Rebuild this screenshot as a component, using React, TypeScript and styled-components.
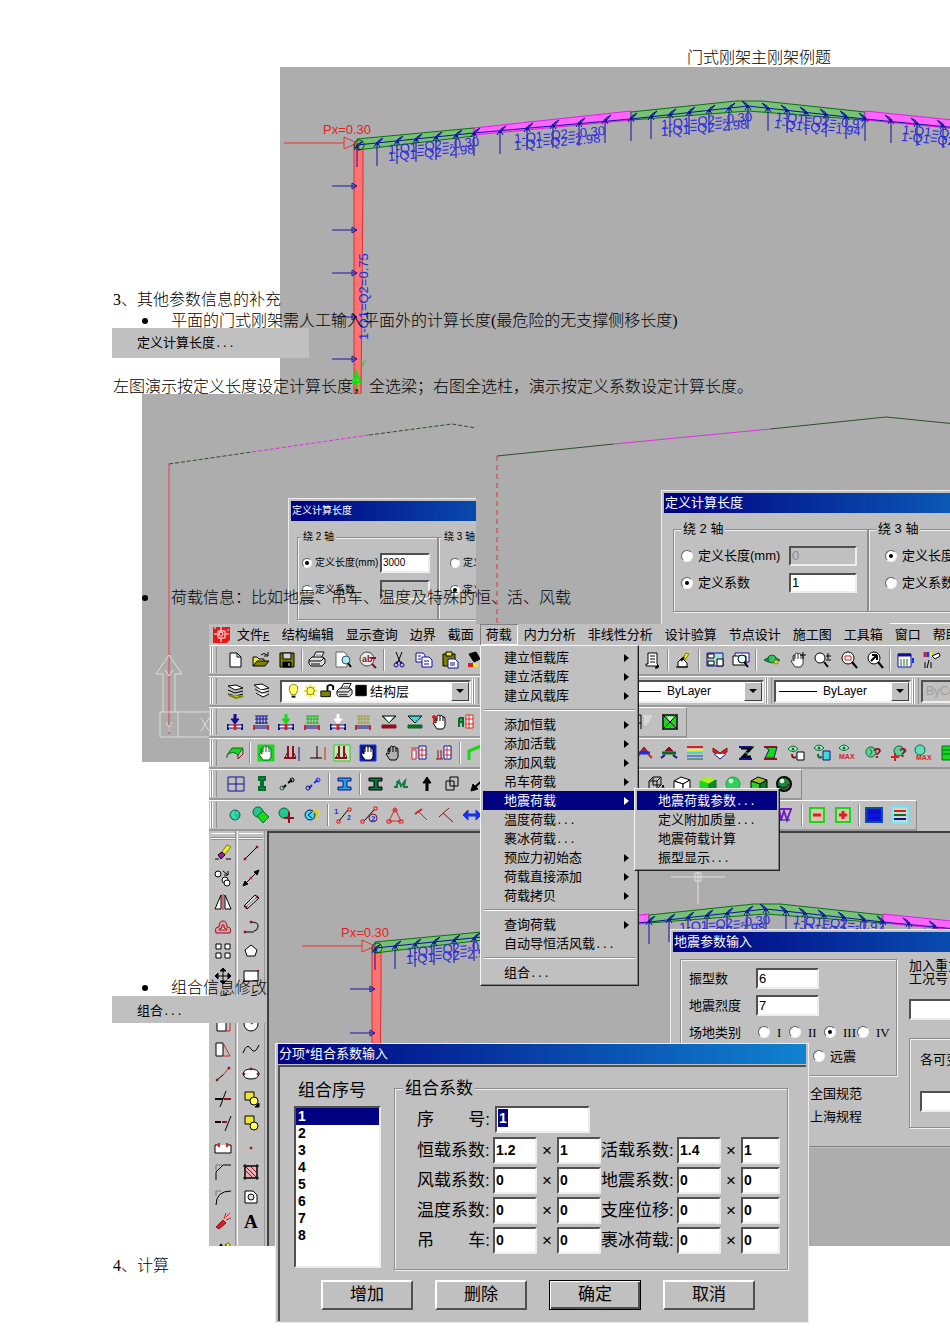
import React from 'react';
import styled, { createGlobalStyle, css } from 'styled-components';

const GlobalStyle = createGlobalStyle`
  *, *::before, *::after { box-sizing: border-box; }
  body { margin: 0; background: #fff; }
  button, input, select { font: inherit; color: inherit; border-radius: 0; margin: 0; }
`;

const UI = `"Liberation Sans", "Noto Sans CJK SC", sans-serif`;
const FACE = '#c0c0c0';
const CANVAS = '#adadad';

/* ---------- document ---------- */

const Page = styled.main`
  position: relative;
  overflow: hidden;
  padding: 47px 0 68px 113px;
  font: 300 16px/21px "Liberation Serif", "Noto Sans CJK SC", serif;
  color: #000;
`;

const Header = styled.header`
  position: relative;
  z-index: 2;
  padding-right: 119px;
  text-align: right;
`;

const Line = styled.p<{ $gap: number }>`
  position: relative;
  z-index: 2;
  margin: ${(p) => p.$gap}px 0 0;
  white-space: nowrap;
`;

const Bullets = styled.ul<{ $gap: number }>`
  position: relative;
  z-index: 2;
  margin: ${(p) => p.$gap}px 0 0;
  padding: 0;
  list-style: none;
  white-space: nowrap;
`;

const Bullet = styled.li`
  display: flex;
  align-items: center;
  gap: 23px;
  padding-left: 29px;
  &::before {
    content: '';
    width: 6px;
    height: 6px;
    border-radius: 50%;
    background: #000;
  }
`;

/* ---------- pasted pictures and windows ---------- */

interface Place { $x: number; $y: number; $w?: number; $h?: number }

const Placed = styled.div<Place>`
  position: absolute;
  left: ${(p) => p.$x}px;
  top: ${(p) => p.$y}px;
  ${(p) => (p.$w ? css`width: ${p.$w}px;` : css`right: 0;`)}
  ${(p) => p.$h && css`height: ${p.$h}px;`}
  overflow: hidden;
  font: 400 13px/19px ${UI};
`;

const Picture = styled(Placed)`
  background: ${CANVAS};
`;

const Drawing = styled.svg`
  display: block;
  width: 100%;
  height: 100%;
`;

const Strip = styled(Placed)`
  padding: 5px 0 6px 25px;
  background: ${FACE};
`;

const DotRun = styled.span`
  font: 11px/13px "Liberation Mono", monospace;
`;

function Label({ text }: { text: string }) {
  const dots = text.endsWith('...');
  return <>{dots ? text.slice(0, -3) : text}{dots && <DotRun>...</DotRun>}</>;
}

/* ---------- frame drawing ---------- */

const STEMS: [number, number, number][] = [
  [357, 145, 167], [377, 142, 166], [397, 140, 164], [416, 138, 162], [436, 136, 160], [456, 134, 158],
  [474, 132, 156], [500, 130, 154], [527, 127, 150], [553, 124, 148], [579, 122, 146], [605, 119, 143],
  [631, 117, 141], [651, 115, 139], [670, 113, 137], [689, 111, 135], [709, 109, 133], [729, 107, 131],
  [748, 105, 129], [768, 107, 131], [787, 109, 133], [806, 111, 135], [826, 113, 137], [846, 115, 139],
  [865, 117, 141], [891, 119, 143], [917, 122, 146], [943, 124, 148], [969, 127, 151], [995, 130, 154],
];

const BEAM_LABELS: [number, number, number, string, string][] = [
  [388, 158, -5, '1-Q1=Q2=-0.30', '1-Q1=Q2=2.98'],
  [514, 147, -5, '1-Q1=Q2=-0.30', '1-Q1=Q2=2.98'],
  [661, 133, -5, '1-Q1=Q2=-0.30', '1-Q1=Q2=2.98'],
  [774, 125, 5, '1-Q1=Q2=-0.97', '1-Q1=Q2=1.94'],
  [901, 138, 5, '1-Q1=Q2=-0.97', '1-Q1=Q2=1.94'],
];

const CadText = styled.text`
  font: 13px "Liberation Sans", sans-serif;
`;

function PortalFrame() {
  return (
    <g fill="none">
      <path d="M354 145H363V185L361 394H354Z" fill="#ff7373" stroke="#d83030" />
      <path d="M357 139L474 128V136L357 150Z" fill="#79c079" stroke="#0c700c" />
      <path d="M474 128L631 111V120L474 135Z" fill="#ff66ff" stroke="#e020e0" />
      <path d="M631 112L736 101H762L865 112V120L748 111L631 120Z" fill="#79c079" stroke="#0c700c" />
      <path d="M865 111L1021 127V135L865 120Z" fill="#ff66ff" stroke="#e020e0" />
      <path d="M357 145L474 133L631 119L748 106L865 119L1021 134" stroke="#1010a0" />
      {STEMS.map(([x, top, bottom]) => (
        <g key={x} stroke="#1010a0">
          <path d={`M${x} ${top}V${bottom}M${x - 3} ${top + 5}L${x} ${top}L${x + 3} ${top + 5}`} />
          <path d={x < 748 ? `M${x} ${top + 3}L${x + 6} ${top - 4}L${x + 1} ${top - 1}Z` : `M${x} ${top + 3}L${x - 6} ${top - 4}L${x - 1} ${top - 1}Z`} fill="#107080" />
        </g>
      ))}
      {BEAM_LABELS.map(([x, y, angle, upper, lower]) => (
        <g key={x} transform={`translate(${x} ${y}) rotate(${angle})`} fill="#2828e0">
          <CadText x={1} y={-4}>{upper}</CadText>
          <CadText x={0} y={3}>{lower}</CadText>
        </g>
      ))}
      {[186, 230, 273, 317, 359].map((y) => (
        <path key={y} d={`M332 ${y}H357M352 ${y - 3}L357 ${y}L352 ${y + 3}Z`} stroke="#1818a0" />
      ))}
      <CadText transform="translate(368 340) rotate(-90)" fill="#2828e0">1-Q1=Q2=0.75</CadText>
      <path d="M284 143H344M344 137L357 143L344 149Z" stroke="#e83030" />
      <circle cx="359" cy="145" r="5" stroke="#0c500c" />
      <CadText x={323} y={134} fill="#e82020">Px=0.30</CadText>
      <path d="M356 394V370M353 382L356 372L360 382Z" stroke="#10e010" fill="#60ff60" strokeWidth="2" />
      <path d="M361 361L363 364L366 360M363 364V367" stroke="#40c020" />
    </g>
  );
}

/* ---------- icons ---------- */

type Stroke = [d: string, stroke: string, fill?: string, width?: number];
interface Glyph { t: string; x: number; y: number; c: string; s: number }

const K = '#000';
const N = '#101090';
const R = '#d82020';
const M = '#8c1020';
const G = '#18d818';
const D = '#0a6a2a';
const Y = '#f0e828';
const W = '#fff';
const C = '#40d8d8';
const O = '#808000';
const BL = '#1430f0';

const ring = (x: number, y: number, r: number) => `M${x - r} ${y}a${r} ${r} 0 1 0 ${2 * r} 0a${r} ${r} 0 1 0 ${-2 * r} 0`;
const support = (c: string): Stroke[] => [
  ['M2 11V17M16 11V17', N, undefined, 2], ['M2 12H16V15H2Z', N, W], ['M9 11V17', R, undefined, 3], ['M9 1V9', c, undefined, 3], ['M5 6H13L9 11Z', c, c],
];
const spread = (c: string): Stroke[] => [
  ['M3 3H16M5 3V11M8 3V11M11 3V11M14 3V11M3 6H16M3 10H16', c], ['M2 12V17M16 12V17', R, undefined, 2], ['M3 13H15M3 15H15', N],
];
const section = (c: string, f: string): Stroke[] => [
  ['M3 3H16V6H12V12H16V15H3V12H8V6H3Z', c, f],
];
const hand = (f: string, c = K): Stroke[] => [
  ['M4 8V5Q5 3 6 5V3Q8 1 9 3Q11 1 12 4Q14 3 14 6V13L12 16H6L2 10Q3 8 5 10V5M9 3V8M12 4V8M6 5V8', c, f],
];
const hammer: Stroke[] = [
  ['M2 14H14', M, undefined, 2], ['M6 2V13M11 2V13', M, undefined, 2], ['M5 9L3 14M12 9L14 14', M],
];
const bolted: Stroke[] = [
  ['M9 2H16V15H9Z', N, W], ['M10 6H16M10 11H16M12 3V14', R],
];
const globe: Stroke[] = [[ring(9, 9, 5), D, '#20c890'], ['M8 5L6 9L10 13M10 6L12 8', C, undefined, 2]];
const eye = (y: number): Stroke[] => [[`M1 ${y}Q6 ${y - 6} 11 ${y}Q6 ${y + 5} 1 ${y}Z`, D, '#a0f0c0'], [ring(6, y, 1), D, D]];
const lens = (f: string): Stroke[] => [[ring(8, 7, 6), K, f], ['M12 11L17 17', K, undefined, 2]];
const cube = (a: string, b: string, c: string): Stroke[] => [
  ['M1 6L8 2L17 5L10 9Z', K, a], ['M1 6L10 9V17L1 14Z', K, b], ['M10 9L17 5V13L10 17Z', K, c],
];

const ICONS: Record<string, (Stroke | Glyph)[]> = {
  new: [['M3 2H10L14 6V16H3Z', K, W], ['M10 2V6H14', K]],
  open: [['M1 15V6H5L7 8H12V10', K, Y], ['M1 15L5 10H17L13 15Z', K, O], ['M9 4Q12 1 15 4M16 1V5H12', K]],
  save: [['M2 2H16V16H2Z', K, O], ['M5 2H13V8H5Z', K, '#d0d0d0'], ['M5 11H13V16H5Z', K, K], ['M11 12V15', W]],
  print: [['M5 7L8 1H16L13 7', K, W], ['M1 9L4 6H15L17 8V12L14 15H3L1 13Z', K, '#ddd'], ['M1 10H13L16 7M3 13H12', K], ['M8 4H13', '#666']],
  preview: [['M2 1H10L13 4V16H2Z', '#666', W], [ring(12, 9, 4), '#356', '#b0e8f0'], ['M14 12L17 16', K, undefined, 2]],
  find: [[ring(8, 8, 7), '#444', '#e8e8e8'], { t: 'ab', x: 3, y: 11, c: M, s: 9 }, ['M13 13L17 17M12 7H17', M, undefined, 2]],
  cut: [['M6 1L10 11M12 1L8 11', K], [ring(6, 14, 2), N], [ring(12, 14, 2), N], ['M8 11L6 12M10 11L12 12', N, undefined, 2]],
  copy: [['M1 2H8L10 4V11H1Z', N, W], ['M7 6H14L17 9V16H7Z', N, W], ['M3 5H6M3 8H6M9 10H14M9 13H14', N]],
  paste: [['M2 3H14V15H2Z', K, O], ['M5 1H11V5H5Z', K, Y], ['M7 8H14L17 11V17H7Z', N, W], ['M9 12H14M9 14H14', N]],
  match: [['M3 3L10 1L14 8L8 11Z', K, K], ['M2 14H7', R, undefined, 4], ['M7 14H12', Y, undefined, 4]],
  script: [['M5 2H14V13L16 15H3V13H5Z', K, W], ['M7 5H12M7 8H12M7 11H12', K], ['M15 14V17H12Z', K, K]],
  pencil: [['M4 11L8 7L13 12V16H4Z', K, W], ['M2 16H14', K], ['M9 7L12 2L15 3L11 9Z', O, Y], ['M7 10L10 6', K, undefined, 2]],
  panes: [['M1 2H17V15H1Z', N, '#a8e0e0'], ['M2 3H8V7H2ZM2 10H8V14H2ZM11 8H17V15H11Z', K, W]],
  windows: [['M3 2H17V11H3Z', N, W], ['M1 5H14V14H1Z', K, W], [ring(10, 8, 4), K, '#dff'], ['M12 11L16 16', K, undefined, 2]],
  orbit: [['M1 9Q9 3 17 9Q9 14 1 9Z', D, '#109040'], [ring(9, 8, 4), D, '#30c060'], [ring(13, 11, 2), O, Y]],
  pan: [...hand(W, '#333'), ['M14 1V8M11 4H17', K]],
  zoomrt: [[ring(6, 7, 5), K, W], ['M10 11L14 16', K, undefined, 2], ['M12 5H17M14 2V8M12 9H17', K]],
  zoomwin: [...lens(W), ['M5 5H11V9H5Z', R]],
  zoomprev: [...lens(W), ['M5 10L11 4M11 4V9M6 4L11 4', K, undefined, 2]],
  props: [['M1 3H14V16H1Z', N, W], ['M1 4H14', N, undefined, 3], ['M4 8V15M7 8V15M10 8V15', D, undefined, 1], ['M16 7V12', BL, undefined, 2]],
  palette: [['M2 1V6', R, undefined, 3], ['M5 1V6', BL, undefined, 3], ['M8 1V6', Y, undefined, 3], ['M9 5L16 2L17 5L12 8Z', K, W], ['M2 11V17M6 9L4 17M8 11V17', K]],
  layers: [['M1 4L9 3L16 6L8 8Z', K, W], ['M1 8L8 11L16 9M1 12L9 14L16 12', K], ['M2 13L9 16L16 14', O, Y, 2]],
  layers2: [['M1 3L9 2L16 6L8 8Z', K, W], ['M2 7L9 11L16 9M3 11L10 15L16 12', K, W]],
  bulb: [['M7 13Q3 8 5 4Q9 0 13 4Q15 8 11 13Z', O, '#ffff70'], ['M7 15H11', K, undefined, 2]],
  sun: [['M4 4L14 14M14 4L4 14M9 2V16M2 9H16', Y, undefined, 2], [ring(9, 9, 4), O, '#ffff70']],
  lock: [['M2 9H12V15H2Z', K, O], ['M9 9V4Q12 1 15 4V8', K, undefined, 2]],
  swatch: [['M3 3H14V14H3Z', K, K]],
  load1: support(N), load2: spread(N), load3: support(G), load4: spread('#20b020'), load5: support(W), load6: spread('#a0a040'),
  wedge1: [['M2 3H16L9 10Z', K, W], ['M3 3L9 10L15 3', D], ['M2 12H16V15H2Z', M, M]],
  wedge2: [['M2 3H16L9 10Z', K, C], ['M2 12H16V15H2Z', D, D]],
  handload: [...hand(W), ['M1 4H6M3 2V10', R, undefined, 2]],
  plate: [['M2 5V14M2 5H6V9H2M6 9V14', D, '#60a060', 2], ['M9 2H16V15H9Z', R, W], ['M9 6H16M9 11H16M12 2V15', R]],
  hatch: [['M1 2H6V16M1 10H6', K], ['M8 3H17M9 5H16M9 7H15M9 9H14M9 11H12', '#eee']],
  solid: [['M2 2H16V16H2Z', '#333', G, 2], ['M2 2L16 16M16 2L2 16', K], ['M6 4H12L9 8Z', '#ddd', '#ddd']],
  roof: [['M1 11L6 4H17L12 11Q7 6 1 11Z', D, G], ['M1 11V14M12 10V15L17 10V5', M]],
  hand1: [['M1 1H17V17H1Z', G, G], ...hand(W, D)],
  ham1: [...hammer, ['M17 3V17', N]],
  cross1: [['M9 2V14M2 14H14', K], ['M9 9V13M17 3V16', R]],
  ham2: [['M1 1H17V17H1Z', G, '#c8e8c0'], ...hammer],
  hand2: [['M1 1H17V17H1Z', BL, '#0818a0'], ...hand(W, K)],
  hand3: hand('#b0b0b0'),
  frame1: [['M2 6H6V15H2ZM1 4H8', R, W], ...bolted],
  frame2: [['M3 6V15M6 6V15M1 15H8', M], ...bolted],
  portal: [['M3 16V7L15 2', G, undefined, 3]],
  truss1: [['M5 8L9 3L13 8Z', M, '#a02050'], ['M3 9H15', BL, undefined, 3], ['M1 14L5 10M13 10L17 14', R, undefined, 2]],
  truss2: [['M5 7L9 3L13 7Z', M, M], ['M2 9H16', D, G, 3], ['M1 14L5 11M13 11L17 14', N, undefined, 2]],
  stripes: [['M1 3H17', R, undefined, 2], ['M1 6H17', Y, undefined, 2], ['M1 9H17', C, undefined, 2], ['M1 12H17', BL, undefined, 1], ['M1 15H17', D, undefined, 1]],
  vee: [['M2 4L9 9L16 4V8L9 12L2 8Z', M, R], ['M3 10L9 15L15 10', N, W]],
  zed1: [['M4 4H14L6 13H14', K, undefined, 3], ['M2 3H15M2 15H15', N, undefined, 2], ['M8 9H12', C]],
  zed2: [['M3 3H15L12 14H3L7 6Z', N, G], ['M2 3H15M2 15H15', M, undefined, 2]],
  view1: [...eye(5), ['M10 8H17V16H10Z', K, W], ['M5 10Q5 15 9 13', M, undefined, 2]],
  view2: [...eye(4), ['M10 7H17V16H10Z', N, C], ['M5 10Q5 15 9 13', D, undefined, 2]],
  max1: [...eye(4), { t: 'MAX', x: 1, y: 15, c: R, s: 7 }],
  query1: [[ring(7, 8, 5), D, '#60d0a0'], ['M6 5L8 8L6 11', D], { t: '?', x: 9, y: 14, c: M, s: 14 }],
  query2: [[ring(10, 7, 5), D, '#60d0a0'], ['M2 13H10M6 9V17', R, undefined, 2], { t: '?', x: 10, y: 13, c: M, s: 13 }],
  max2: [[ring(6, 6, 5), D, '#60e0c0'], { t: 'MAX', x: 2, y: 16, c: R, s: 7 }],
  sheet: [['M2 2H12V16H2Z', D, G], ['M2 6H12M2 10H12', D]],
  grid: [['M1 2H17V16H1ZM9 2V16M1 9H17', N]],
  column: [['M6 2H12V5H10V12H12V15H6V12H8V5H6Z', D, '#109050', 2]],
  link: [['M5 13L8 10M10 8L14 5', K, undefined, 2], [ring(4, 13, 2), D], [ring(14, 5, 2), K]],
  link2: [['M5 13L8 10M10 8L14 5', BL, undefined, 2], [ring(4, 13, 2), N], [ring(14, 5, 2), BL]],
  beam1: section(N, '#20a0e0'), beam2: section(K, '#107040'),
  haunch: [['M2 12H6M4 12L7 6L9 11L13 6L12 12H16M4 7H7', '#108040', undefined, 2]],
  up: [['M9 16V7', K, undefined, 3], ['M5 8L9 2L13 8Z', K, K]],
  group: [['M3 6H11V15H3ZM7 2H15V11H7Z', K, 'none']],
  arrowdl: [['M16 3L6 12', K, undefined, 2], ['M2 16L4 9L9 14Z', K, K]],
  wire: [['M1 6H9V14H1ZM5 2H13V10H5ZM1 6L5 2M9 6L13 2M9 14L13 10', K], ['M13 16L15 10L17 16Z', K]],
  box1: cube(W, W, W), box2: [['M1 6L8 2L17 5L10 9Z', '#a0f010', '#b0f020'], ['M1 6L10 9V17L1 14Z', G, G], ['M10 9L17 5V13L10 17Z', D, '#0a8a2a']],
  ball: [[ring(9, 9, 7), '#18a040', '#30d060'], [ring(7, 6, 2), '#b0ffc0', '#d0ffd8']],
  box3: cube('#a0c020', '#30d020', '#0a7a2a'),
  ball2: [[ring(9, 9, 7), K, '#208040', 2], [ring(7, 6, 2), '#d0ffd0', W], ['M4 11Q9 16 14 9', K]],
  globe,
  globe2: [[ring(6, 6, 5), D, '#20c890'], ['M5 10L11 5L17 11L11 17Z', D, G]],
  globe3: [[ring(7, 7, 5), D, '#20c890'], ['M12 6V17M7 12H17', M, undefined, 2]],
  globe4: [[ring(7, 9, 5), N, C], ['M9 6L5 9L9 12', N], { t: '?', x: 9, y: 14, c: '#e0d000', s: 14 }],
  line1: [['M5 15L14 4', K], ['M3 14H6V17H3ZM14 2H17V5H14Z', R], { t: '1', x: 0, y: 8, c: BL, s: 8 }, { t: '2', x: 13, y: 14, c: BL, s: 7 }],
  line2: [['M4 15L14 4', K], ['M1 14H4V17H1ZM14 1H17V4H14Z', R], [ring(13, 12, 4), M], { t: '2', x: 11, y: 15, c: BL, s: 8 }],
  angle1: [['M9 3L3 15H15Z', R, 'none'], [ring(9, 4, 2), R], ['M1 14H5V17H1ZM13 14H17V17H13Z', R]],
  angle2: [['M7 6L15 14', R], ['M3 8L10 3', R, undefined, 2]],
  angle3: [['M2 11L12 2M6 7L16 16', M]],
  both: [['M4 9H14', BL, undefined, 3], ['M0 9L5 4V14ZM18 9L13 4V14Z', BL, BL]],
  springs: [['M1 3H15M2 3L4 14L7 5L10 14L14 3', '#7020c0', undefined, 2], ['M3 14H13', N]],
  minus: [['M2 2H16V16H2Z', G, '#d8c8b0', 2], ['M5 9H13', R, undefined, 3]],
  plus: [['M2 2H16V16H2Z', G, '#d8c8b0', 2], ['M5 9H13M9 5V13', R, undefined, 3]],
  block: [['M1 2H17V16H1Z', '#0a50a0', '#1010e0', 2], ['M4 6H15M4 12H15', N]],
  bars: [['M1 1H17V17H1Z', '#70e8f0', '#d0d8d0', 2], ['M3 5H15', R, undefined, 2], ['M3 9H15', D, undefined, 2], ['M3 13H15', N, undefined, 2]],
  erase: [['M1 15H5M12 15H17', K], ['M7 9L13 1L17 3L11 10Z', O, Y], ['M4 11L8 8L11 11L7 15Z', K, '#a020a0']],
  copyobj: [[ring(4, 5, 3), K, W], [ring(11, 11, 3), K, W], [ring(13, 14, 3), K, W], ['M9 2L14 6M14 2V6H10', K]],
  mirror: [['M7 2V16H1Z', K, W], ['M11 2V16H17Z', K, W], ['M9 1V17', R]],
  offset: [['M2 15H16Q18 9 13 9Q13 3 9 3Q5 3 5 9Q0 9 2 15Z', M, '#e8a0a0'], ['M5 12H13Q13 10 10 10V7H8V10Q5 10 5 12Z', M, '#ddd']],
  array: [['M2 2H7V7H2ZM11 2H16V7H11ZM2 11H7V16H2ZM11 11H16V16H11Z', K, W]],
  move: [['M9 2V16M2 9H16', K], ['M6 4L9 1L12 4ZM6 14L9 17L12 14ZM4 6L1 9L4 12ZM14 6L17 9L14 12Z', K, K]],
  rotate: [['M4 13Q2 3 12 4M12 1V7', K]],
  scale: [['M3 6H12V15H3Z', K, W], ['M3 2H16V15H12', R, 'none']],
  stretch: [['M2 3H9V16H2Z', K, W], ['M9 3L16 16H9', R, 'none']],
  lengthen: [['M3 15L9 10', K], ['M9 10L15 3', R], [ring(3, 15, 1), M, M], [ring(15, 3, 1), M, M]],
  trim: [['M12 1L6 17', K], ['M1 9H9', K, undefined, 2], ['M10 9H17', M, undefined, 2]],
  extend: [['M17 2L11 17', K], ['M1 8H7', K, undefined, 2], ['M8 8H13', M, undefined, 2]],
  break: [['M1 6H5M13 6H17V14H1V6', K, W], ['M5 4V8M13 4V8', R, undefined, 2]],
  chamfer: [['M2 17V9L9 2H17', K], ['M2 8V2H8', '#777']],
  fillet: [['M2 17Q2 3 17 3', K], ['M2 8V3H7', '#777']],
  explode: [['M2 15L9 8L12 11L5 17Z', M, R], ['M10 7L12 1M12 8L17 6M12 5L16 1', R]],
  text3: [['M1 17L7 9L10 14L13 8', K, undefined, 3], [ring(14, 8, 2), O, Y]],
  line: [['M3 15L15 3', K], [ring(3, 15, 1), M, M], [ring(15, 3, 1), M, M]],
  xline: [['M2 16L16 2', K], ['M1 17L3 12L6 15ZM17 1L12 3L15 6Z', K, K], [ring(9, 9, 1), R, R]],
  mline: [['M2 13L13 2L17 5L5 16Z', K, '#ddd'], ['M5 13L14 5', '#777'], [ring(4, 14, 1), M, M], [ring(15, 4, 1), M, M]],
  pline: [['M2 14H12M9 4Q17 4 16 9Q15 13 12 13', K], [ring(3, 14, 1), M, M], [ring(9, 4, 1), M, M]],
  polygon: [['M9 3L15 8L13 14H5L3 8Z', K, W]],
  rect: [['M2 4H16V14H2Z', K, W], ['M15 4H17M1 14H3', M, undefined, 2]],
  arc: [['M3 15Q3 4 15 4', K]],
  circle: [[ring(9, 8, 7), K, W], ['M9 8L12 5', R, undefined, 2]],
  spline: [['M1 13Q5 2 9 9Q13 15 17 5', K]],
  ellipse: [['M1 9Q2 4 9 4Q16 4 17 9Q16 14 9 14Q2 14 1 9Z', K, W], [ring(2, 9, 1), M, M], [ring(9, 4, 1), M, M], [ring(16, 9, 1), M, M]],
  insert: [['M3 2H12V10H3Z', K, Y], [ring(12, 11, 4), K, '#ffff60'], ['M13 17H17V13Z', K, K]],
  blockdef: [['M3 2H12V10H3Z', K, Y], [ring(12, 12, 4), K, '#ffff60']],
  point: [[ring(9, 9, 1), M, R]],
  hatchobj: [['M3 3H15V15H3ZM1 3H17M3 1V17M15 1V17M1 15H17', K, '#e8b0b0'], ['M4 8L10 14M4 4L14 14M9 4L14 9', M]],
  region: [['M3 3H11L15 7V15H3Z', K, W], [ring(9, 9, 3), K, '#ddd']],
  mtext: [{ t: 'A', x: 2, y: 16, c: K, s: 19 }],
};

function Icon({ name }: { name: string }) {
  return (
    <svg width="18" height="18" viewBox="0 0 18 18" aria-hidden="true">
      {ICONS[name].map((part, i) =>
        Array.isArray(part) ? (
          <path key={i} d={part[0]} stroke={part[1]} fill={part[2] ?? 'none'} strokeWidth={part[3] ?? 1} />
        ) : (
          <text key={i} x={part.x} y={part.y} fill={part.c} fontSize={part.s} fontWeight="700" fontFamily={name === 'mtext' ? 'Liberation Serif' : 'Liberation Sans'}>{part.t}</text>
        ),
      )}
    </svg>
  );
}

/* ---------- CAD window ---------- */

const MenuBar = styled.nav`
  display: flex;
  align-items: center;
  height: 21px;
  padding-left: 4px;
  white-space: nowrap;
`;

const MenuTitle = styled.button<{ $open?: boolean }>`
  flex: none;
  height: 21px;
  padding: 0 6px;
  border: 0;
  background: none;
  ${(p) => p.$open && css`box-shadow: inset 1px 1px #808080, inset -1px -1px #fff;`}
`;

const Logo = styled.svg`
  flex: none;
  width: 18px;
  height: 18px;
`;

const Bar = styled.div<{ $w?: number }>`
  display: flex;
  align-items: center;
  height: 31px;
  ${(p) => p.$w && css`width: ${p.$w}px;`}
  border-top: 1px solid #fff;
  border-bottom: 2px solid #989898;
  ${(p) => p.$w && css`border-right: 1px solid #8c8c8c;`}
`;

const Grip = styled.span`
  flex: none;
  width: 6px;
  height: 26px;
  margin: 0 2px;
  border: solid #909090;
  border-width: 0 1px;
  box-shadow: inset 1px 0 #fff, -1px 0 #fff;
`;

const Group = styled.div<{ $w: number; $ml: number }>`
  flex: none;
  display: flex;
  align-items: center;
  justify-content: space-between;
  width: ${(p) => p.$w}px;
  margin-left: ${(p) => p.$ml}px;
`;

const ToolButton = styled.button`
  flex: none;
  display: block;
  width: 18px;
  height: 18px;
  padding: 0;
  border: 0;
  background: none;
  svg { display: block; }
`;

const Divider = styled.span`
  width: 2px;
  height: 22px;
  margin: 0 -2px;
  background: linear-gradient(90deg, #8c8c8c 50%, #fff 50%);
`;

const inset = css`
  border: 2px solid;
  border-color: #505050 #eee #eee #505050;
`;

const Combo = styled.div<{ $w: number; $ml?: number; $off?: boolean }>`
  flex: none;
  display: flex;
  align-items: center;
  gap: 4px;
  width: ${(p) => p.$w}px;
  height: 23px;
  margin-left: ${(p) => p.$ml ?? 0}px;
  padding-left: 3px;
  background: ${(p) => (p.$off ? FACE : '#fff')};
  color: ${(p) => (p.$off ? '#909090' : '#000')};
  font-size: 12px;
  ${inset}
`;

const ComboSelect = styled.select<{ $size?: number }>`
  flex: 1;
  min-width: 0;
  height: 19px;
  padding: 0;
  border: 0;
  appearance: none;
  background: none;
  font-size: ${(p) => p.$size ?? 12}px;
`;

const ComboArrow = styled.span`
  flex: none;
  display: grid;
  place-items: center;
  width: 18px;
  height: 19px;
  background: ${FACE};
  border: 1px solid;
  border-color: #fff #404040 #404040 #fff;
  &::after {
    content: '';
    border: 4px solid transparent;
    border-top-color: #000;
    border-bottom: 0;
  }
`;

const LineSample = styled.span<{ $w: number }>`
  flex: none;
  width: ${(p) => p.$w}px;
  height: 1px;
  margin-right: 2px;
  background: #000;
`;

const LayerIcons = styled.span`
  display: flex;
  margin-right: -4px;
  svg { width: 17px; }
`;

function Tools({ w, ml, names }: { w: number; ml: number; names: string }) {
  return (
    <Group $w={w} $ml={ml}>
      {names.split(' ').map((n, i) => (n === '|' ? <Divider key={i} /> : <ToolButton key={i} aria-label={n}><Icon name={n} /></ToolButton>))}
    </Group>
  );
}

const CadWindow = styled(Placed)`
  background: ${FACE};
`;

const Work = styled.div`
  display: flex;
  height: 415px;
`;

const Palette = styled.div`
  flex: none;
  display: grid;
  grid-template-columns: 28px 28px;
  grid-template-rows: 10px;
  grid-auto-rows: minmax(24px, 1fr);
  justify-items: center;
  align-items: center;
  width: 58px;
  height: 427px;
  background: linear-gradient(90deg, transparent 26px, #989898 26px 27px, transparent 27px 28px, #fff 28px 29px, transparent 29px 55px, #989898 55px 56px, transparent 56px);
`;

const PaletteGrip = styled.span`
  width: 24px;
  height: 6px;
  border: solid #fff;
  border-width: 1px 0;
  box-shadow: 0 1px #909090, inset 0 -1px #909090;
`;

const Viewport = styled.div`
  flex: 1;
  min-width: 0;
  background: ${CANVAS};
  border: solid #404040;
  border-width: 2px 0 0 2px;
`;

const TITLES = ['结构编辑', '显示查询', '边界', '截面', '荷载', '内力分析', '非线性分析', '设计验算', '节点设计', '施工图', '工具箱', '窗口', '帮助'];

const PALETTE = ['erase', 'line', 'copyobj', 'xline', 'mirror', 'mline', 'offset', 'pline', 'array', 'polygon', 'move', 'rect', 'rotate', 'arc',
  'scale', 'circle', 'stretch', 'spline', 'lengthen', 'ellipse', 'trim', 'insert', 'extend', 'blockdef', 'break', 'point', 'chamfer', 'hatchobj',
  'fillet', 'region', 'explode', 'mtext', 'text3'];

function Cad() {
  return (
    <CadWindow $x={209} $y={624}>
      <MenuBar>
        <Logo viewBox="0 0 18 18">
          <path d="M0 1H17V14L14 17H0Z" fill="#e81818" />
          <path d="M5 5H12V12H5ZM8 1V5M8 12V16M1 8H5M12 8H16M2 3V1M15 5V3" fill="none" stroke="#fff" strokeWidth="1" />
          <circle cx="8" cy="8" r="2" fill="none" stroke="#fff" />
        </Logo>
        <MenuTitle>文件<u><DotRun>F</DotRun></u></MenuTitle>
        {TITLES.map((t) => <MenuTitle key={t} $open={t === '荷载'}>{t}</MenuTitle>)}
      </MenuBar>
      <Bar>
        <Grip />
        <Tools w={257} ml={8} names="new open save | print preview find | cut copy paste match" />
        <Tools w={298} ml={159} names="script | pencil | panes windows | orbit pan zoomrt zoomwin zoomprev | props palette" />
      </Bar>
      <Bar>
        <Grip />
        <Tools w={44} ml={8} names="layers layers2" />
        <Combo $w={191} $ml={9}>
          <LayerIcons>{['bulb', 'sun', 'lock', 'print', 'swatch'].map((n) => <Icon key={n} name={n} />)}</LayerIcons>
          <ComboSelect $size={13} aria-label="图层"><option>结构层</option></ComboSelect>
          <ComboArrow />
        </Combo>
        <Grip />
        <Combo $w={150} $ml={133}>
          <LineSample $w={42} />
          <ComboSelect aria-label="颜色"><option>ByLayer</option></ComboSelect>
          <ComboArrow />
        </Combo>
        <Grip />
        <Combo $w={137}>
          <LineSample $w={38} />
          <ComboSelect aria-label="线型"><option>ByLayer</option></ComboSelect>
          <ComboArrow />
        </Combo>
        <Grip />
        <Combo $w={120} $off>
          <ComboSelect aria-label="打印样式" disabled><option>ByColor</option></ComboSelect>
          <ComboArrow />
        </Combo>
      </Bar>
      <Bar $w={478}>
        <Grip />
        <Tools w={249} ml={7} names="load1 load2 load3 load4 load5 load6 wedge1 wedge2 handload plate" />
        <Tools w={44} ml={160} names="hatch solid" />
      </Bar>
      <Bar>
        <Grip />
        <Tools w={258} ml={7} names="roof | hand1 ham1 cross1 ham2 hand2 hand3 frame1 frame2 | portal" />
        <Tools w={323} ml={151} names="truss1 truss2 stripes vee zed1 zed2 view1 view2 max1 query1 query2 max2 sheet" />
      </Bar>
      <Bar $w={593}>
        <Grip />
        <Tools w={260} ml={8} names="grid column link link2 | beam1 | beam2 haunch up group arrowdl" />
        <Tools w={145} ml={161} names="wire box1 box2 ball box3 ball2" />
      </Bar>
      <Bar $w={708}>
        <Grip />
        <Tools w={255} ml={7} names="globe globe2 globe3 globe4 | line1 line2 angle1 angle2 angle3 both" />
        <Tools w={132} ml={296} names="springs | minus plus | block bars" />
      </Bar>
      <Work>
        <Palette>
          <PaletteGrip /><PaletteGrip />
          {PALETTE.map((n) => <ToolButton key={n} aria-label={n}><Icon name={n} /></ToolButton>)}
        </Palette>
        <Viewport>
          <Drawing>
            <g transform="translate(-251 -30)"><PortalFrame /></g>
            <path d="M402 44H456M429 39V71M426 40H432V48H426Z" stroke="#e0e0e0" fill="none" />
          </Drawing>
        </Viewport>
      </Work>
    </CadWindow>
  );
}

/* ---------- menus ---------- */

const MenuBox = styled(Placed)`
  padding: 2px 2px 3px;
  background: ${FACE};
  border: 1px solid;
  border-color: #f4f4f4 #202020 #202020 #f4f4f4;
  box-shadow: inset -1px -1px #808080;
`;

const MenuItem = styled.button<{ $hot?: boolean }>`
  display: flex;
  align-items: center;
  justify-content: space-between;
  width: 100%;
  height: 19px;
  padding: 0 7px 0 21px;
  border: 0;
  white-space: nowrap;
  background: ${(p) => (p.$hot ? '#000080' : 'none')};
  color: ${(p) => (p.$hot ? '#fff' : '#000')};
`;

const MenuArrow = styled.span`
  border: 4px solid transparent;
  border-left: 5px solid currentColor;
  border-right: 0;
`;

const MenuRule = styled.hr`
  height: 2px;
  margin: 4px 1px;
  border: 0;
  background: linear-gradient(#8c8c8c 50%, #fff 50%);
`;

const LOAD_MENU = ['建立恒载库>', '建立活载库>', '建立风载库>', '-', '添加恒载>', '添加活载>', '添加风载>', '吊车荷载>', '地震荷载>', '温度荷载...', '裹冰荷载...',
  '预应力初始态>', '荷载直接添加>', '荷载拷贝>', '-', '查询荷载>', '自动导恒活风载...', '-', '组合...'];
const QUAKE_MENU = ['地震荷载参数...', '定义附加质量...', '地震荷载计算', '振型显示...'];

function Menu({ items, hot, ...place }: { items: string[]; hot: string } & Place) {
  return (
    <MenuBox {...place} role="menu">
      {items.map((item, i) => {
        const text = item.replace('>', '');
        return item === '-' ? <MenuRule key={i} /> : (
          <MenuItem key={i} role="menuitem" $hot={text === hot}>
            <span><Label text={text} /></span>{item.endsWith('>') && <MenuArrow />}
          </MenuItem>
        );
      })}
    </MenuBox>
  );
}

/* ---------- dialogs ---------- */

const DialogBox = styled(Placed)`
  padding: 2px 0 0 2px;
  background: ${FACE};
  border: solid #ececec;
  border-width: 1px 0 0 1px;
`;

const TitleBar = styled.h2<{ $size?: number; $span: number }>`
  height: 20px;
  margin: 0;
  padding-left: 1px;
  font: 400 ${(p) => p.$size ?? 13}px/19px ${UI};
  color: #fff;
  white-space: nowrap;
  background: linear-gradient(90deg, #000080, #1084d0 ${(p) => p.$span}px);
`;

const Fieldset = styled.fieldset`
  min-width: 0;
  margin: 0;
  padding: 0;
  border: 1px solid #8c8c8c;
  box-shadow: inset 1px 1px #f0f0f0, 1px 1px #f0f0f0;
`;

const Legend = styled.legend`
  margin-left: 7px;
  padding: 0 2px;
  white-space: pre;
  background: ${FACE};
`;

const TextBox = styled.input<{ $w?: number; $h: number }>`
  ${(p) => (p.$w ? css`width: ${p.$w}px;` : css`width: 100%; min-width: 0;`)}
  height: ${(p) => p.$h}px;
  padding: 0 1px;
  background: #fff;
  ${inset}
  &:disabled { background: ${FACE}; color: #888; }
`;

const Radio = styled.input.attrs({ type: 'radio' })<{ $s?: number }>`
  appearance: none;
  flex: none;
  display: grid;
  place-items: center;
  width: ${(p) => p.$s ?? 12}px;
  height: ${(p) => p.$s ?? 12}px;
  border: 1px solid;
  border-color: #606060 #f4f4f4 #f4f4f4 #606060;
  border-radius: 50%;
  background: #fff;
  &:checked::after {
    content: '';
    width: 4px;
    height: 4px;
    border-radius: 50%;
    background: #000;
  }
`;

const Choice = styled.label<{ $gap?: number }>`
  display: flex;
  align-items: center;
  gap: ${(p) => p.$gap ?? 5}px;
  white-space: nowrap;
`;

const LengthBody = styled.div<{ $small?: boolean }>`
  display: grid;
  grid-template-columns: ${(p) => (p.$small ? '141px 180px' : '195px 230px')};
  margin: ${(p) => (p.$small ? '8px 0 0 6px' : '8px 0 0 9px')};
  font-size: ${(p) => (p.$small ? 10 : 13)}px;
`;

const AxisGroup = styled(Fieldset)<{ $small?: boolean }>`
  height: 91px;
  legend {
    margin-left: ${(p) => (p.$small ? 3 : 7)}px;
    line-height: 16px;
  }
  & + & > div { padding-left: ${(p) => (p.$small ? 11 : 16)}px; }
`;

const AxisRows = styled.div<{ $small?: boolean }>`
  display: grid;
  grid-template-columns: ${(p) => (p.$small ? '78px 50px' : '108px 68px')};
  grid-auto-rows: 27px;
  align-items: center;
  padding: ${(p) => (p.$small ? '4px 0 0 4px' : '5px 0 0 7px')};
`;

const OkEdge = styled.div`
  height: 4px;
  margin: 11px 0 0 226px;
  border-top: 2px solid #fff;
`;

function AxisFields({ id, legend, small, byLength, length, factor }: { id: string; legend: string; small?: boolean; byLength: boolean; length: string; factor: string }) {
  return (
    <AxisGroup $small={small}>
      <Legend>{legend}</Legend>
      <AxisRows $small={small}>
        <Choice $gap={small ? 3 : 5}><Radio name={id} defaultChecked={byLength} $s={small ? 10 : 12} />定义长度(mm)</Choice>
        <TextBox aria-label="定义长度" $h={20} disabled={!byLength} defaultValue={length} />
        <Choice $gap={small ? 3 : 5}><Radio name={id} defaultChecked={!byLength} $s={small ? 10 : 12} />定义系数</Choice>
        <TextBox aria-label="定义系数" $h={20} disabled={byLength} defaultValue={factor} />
      </AxisRows>
    </AxisGroup>
  );
}

const SeismicBody = styled.div`
  display: grid;
  grid-template-columns: 217px 1fr;
  column-gap: 12px;
  padding: 7px 0 0 7px;
  height: 195px;
  border-bottom: 1px solid #808080;
`;

const SeismicGroup = styled(Fieldset)`
  display: grid;
  grid-template-columns: 67px 1fr;
  grid-template-rows: 27px 27px 26px 22px;
  align-items: center;
  height: 117px;
  padding: 5px 0 0 8px;
`;

const SiteClasses = styled.div`
  display: grid;
  grid-template-columns: 31px 35px 33px 33px;
  padding-left: 2px;
  font-family: "Liberation Serif", serif;
`;

const Far = styled(Choice)`
  grid-column: 2;
  padding-left: 57px;
`;

const Codes = styled.div`
  padding: 6px 0 0 130px;
  line-height: 23px;
`;

const SideNote = styled.p`
  margin: 0 0 14px;
  line-height: 13px;
`;

const SideGroup = styled(Fieldset)`
  height: 90px;
  margin-top: 18px;
  padding: 11px 0 0 10px;
`;

const SideLabel = styled.label`
  display: grid;
  gap: 22px;
  white-space: nowrap;
`;

const FactorDialog = styled(DialogBox)`
  padding: 0 2px 1px 2px;
  border-width: 1px;
`;

const FactorBody = styled.div`
  margin-top: 1px;
  padding: 12px 18px 11px 14px;
  border: solid #505050;
  border-width: 2px 0 0 2px;
  font-size: 17px;
`;

const FactorColumns = styled.div`
  display: grid;
  grid-template-columns: 87px 1fr;
  column-gap: 13px;
`;

const ListLabel = styled.label`
  display: block;
  height: 27px;
  padding-left: 4px;
  line-height: 24px;
`;

const ListBox = styled.select`
  display: block;
  width: 87px;
  height: 162px;
  padding: 0;
  overflow: hidden;
  background: #fff;
  color: #000;
  outline: none;
  ${inset}
  option {
    min-height: 17px;
    padding: 0 2px;
    font: 700 14px/17px ${UI};
  }
  option:checked {
    background: #000080 linear-gradient(#000080, #000080);
    color: #fff;
    -webkit-text-fill-color: #fff;
  }
`;

const FactorGroup = styled(Fieldset)`
  height: 191px;
  padding: 6px 0 0 22px;
  legend { margin-left: -14px; }
`;

const FactorGrid = styled.div`
  display: grid;
  grid-template-columns: 76px 44px 20px 44px 76px 44px 20px 39px;
  grid-template-rows: 31px;
  grid-auto-rows: 30px;
  align-items: center;
  input { font: 700 14px/20px ${UI}; }
`;

const FieldName = styled.label`
  display: flex;
  justify-content: space-between;
  width: 73px;
  white-space: nowrap;
`;

const Serial = styled.span`
  grid-column: 2 / span 7;
  display: flex;
  align-items: center;
  padding-left: 2px;
`;

const SerialBox = styled.span`
  display: flex;
  width: 95px;
  height: 27px;
  padding: 1px;
  background: #fff;
  ${inset}
  input {
    width: 10px;
    height: 18px;
    padding: 0 1px;
    border: 0;
    background: #000080;
    color: #fff;
  }
`;

const Times = styled.span`
  text-align: center;
`;

const Actions = styled.div`
  display: flex;
  gap: 22px;
  padding: 10px 0 0 27px;
`;

const PushButton = styled.button<{ $main?: boolean }>`
  width: 92px;
  height: 30px;
  padding: 0;
  background: ${FACE};
  font-size: 17px;
  line-height: 24px;
  border: 2px solid;
  border-color: #fff #505050 #505050 #fff;
  ${(p) => p.$main && css`border: 1px solid #000; box-shadow: inset 1px 1px #fff, inset -2px -2px #505050;`}
`;

const FACTORS: [string, string, string, string, string, string][] = [
  ['恒载系数:', '1.2', '1', '活载系数:', '1.4', '1'],
  ['风载系数:', '0', '0', '地震系数:', '0', '0'],
  ['温度系数:', '0', '0', '支座位移:', '0', '0'],
  ['吊|车:', '0', '0', '裹冰荷载:', '0', '0'],
];

function Factor({ id, name, a, b }: { id: string; name: string; a: string; b: string }) {
  return (
    <>
      <FieldName htmlFor={id}>{name.split('|').map((s) => <span key={s}>{s}</span>)}</FieldName>
      <TextBox id={id} $h={27} defaultValue={a} />
      <Times>×</Times>
      <TextBox aria-label={name} $h={27} defaultValue={b} />
    </>
  );
}

export default function App() {
  return (
    <Page>
      <GlobalStyle />
      <Header>门式刚架主刚架例题</Header>
      <Line $gap={221}>3、其他参数信息的补充</Line>
      <Bullets $gap={0}><Bullet>平面的门式刚架需人工输入平面外的计算长度(最危险的无支撑侧移长度)</Bullet></Bullets>
      <Line $gap={45}>左图演示按定义长度设定计算长度，全选梁；右图全选柱，演示按定义系数设定计算长度。</Line>
      <Bullets $gap={190}><Bullet>荷载信息：比如地震、吊车、温度及特殊的恒、活、风载</Bullet></Bullets>
      <Bullets $gap={369}><Bullet>组合信息修改</Bullet></Bullets>
      <Line $gap={257}>4、计算</Line>

      <Picture $x={280} $y={67} $h={327}>
        <Drawing><g transform="translate(-280 -67)"><PortalFrame /></g></Drawing>
      </Picture>
      <Strip $x={112} $y={328} $w={197}><Label text="定义计算长度..." /></Strip>

      <Picture $x={476} $y={394} $h={231}>
        <Drawing fill="none">
          <path d="M21 62L138 50M294 35L410 23L640 46" stroke="#285028" />
          <path d="M138 50L294 35" stroke="#e030e0" />
          <path d="M21 62V231" stroke="#e03030" strokeDasharray="5 4" />
        </Drawing>
      </Picture>
      <Picture $x={142} $y={394} $w={334} $h={368}>
        <Drawing fill="none">
          <path d="M27 70L110 58M227 41L310 30L334 34" stroke="#285028" strokeDasharray="4 2" />
          <path d="M110 58L227 41" stroke="#e030e0" strokeDasharray="4 2" />
          <path d="M27 70V340" stroke="#e84040" />
          <path d="M27 261L40 280H33V318M27 261L14 280H21V318M18 318H36V343H18ZM36 318H68M36 343H68M24 328L27 333L30 328M27 333V338M59 324L67 337M67 324L59 337M23 276L27 282L31 276" stroke="#dcdcdc" />
        </Drawing>
      </Picture>
      <DialogBox $x={288} $y={498} $w={188} $h={127}>
        <TitleBar $size={10} $span={330}>定义计算长度</TitleBar>
        <LengthBody $small>
          <AxisFields id="l2" legend="绕 2 轴" small byLength length="3000" factor="" />
          <AxisFields id="l3" legend="绕 3 轴" small byLength={false} length="" factor="1" />
        </LengthBody>
      </DialogBox>
      <DialogBox $x={661} $y={490} $h={135}>
        <TitleBar $span={430}>定义计算长度</TitleBar>
        <LengthBody>
          <AxisFields id="r2" legend="绕 2 轴" byLength={false} length="0" factor="1" />
          <AxisFields id="r3" legend="绕 3 轴" byLength length="" factor="" />
        </LengthBody>
        <OkEdge />
      </DialogBox>

      <Cad />

      <DialogBox $x={670} $y={929} $h={219}>
        <TitleBar $span={480}>地震参数输入</TitleBar>
        <SeismicBody>
          <div>
            <SeismicGroup>
              <label htmlFor="modes">振型数</label>
              <TextBox id="modes" $w={63} $h={21} defaultValue="6" />
              <label htmlFor="intensity">地震烈度</label>
              <TextBox id="intensity" $w={63} $h={21} defaultValue="7" />
              <span>场地类别</span>
              <SiteClasses>
                {['I', 'II', 'III', 'IV'].map((c) => <Choice key={c} $gap={7}><Radio name="site" defaultChecked={c === 'III'} />{c}</Choice>)}
              </SiteClasses>
              <Far><Radio name="distance" />远震</Far>
            </SeismicGroup>
            <Codes>全国规范<br />上海规程</Codes>
          </div>
          <div>
            <SideNote>加入重力<br />工况号</SideNote>
            <TextBox aria-label="工况号" $h={21} />
            <SideGroup>
              <SideLabel>各可变荷载<TextBox $h={21} /></SideLabel>
            </SideGroup>
          </div>
        </SeismicBody>
      </DialogBox>

      <Menu items={LOAD_MENU} hot="地震荷载" $x={480} $y={645} $w={159} />
      <Menu items={QUAKE_MENU} hot="地震荷载参数..." $x={634} $y={788} $w={146} />

      <Strip $x={112} $y={996} $w={154} $h={27}><Label text="组合..." /></Strip>

      <FactorDialog $x={275} $y={1043} $w={534}>
        <TitleBar $span={530}>分项*组合系数输入</TitleBar>
        <FactorBody>
          <FactorColumns>
            <div>
              <ListLabel htmlFor="combos">组合序号</ListLabel>
              <ListBox id="combos" size={9} defaultValue="1">
                {[1, 2, 3, 4, 5, 6, 7, 8].map((n) => <option key={n} value={n}>{n}</option>)}
              </ListBox>
            </div>
            <FactorGroup>
              <Legend>组合系数</Legend>
              <FactorGrid>
                <FieldName htmlFor="serial"><span>序</span><span>号:</span></FieldName>
                <Serial><SerialBox><input id="serial" defaultValue="1" /></SerialBox></Serial>
                {FACTORS.map(([n1, a1, b1, n2, a2, b2]) => (
                  <React.Fragment key={n1}>
                    <Factor id={n1} name={n1} a={a1} b={b1} />
                    <Factor id={n2} name={n2} a={a2} b={b2} />
                  </React.Fragment>
                ))}
              </FactorGrid>
            </FactorGroup>
          </FactorColumns>
          <Actions>
            <PushButton>增加</PushButton>
            <PushButton>删除</PushButton>
            <PushButton $main>确定</PushButton>
            <PushButton>取消</PushButton>
          </Actions>
        </FactorBody>
      </FactorDialog>
    </Page>
  );
}
